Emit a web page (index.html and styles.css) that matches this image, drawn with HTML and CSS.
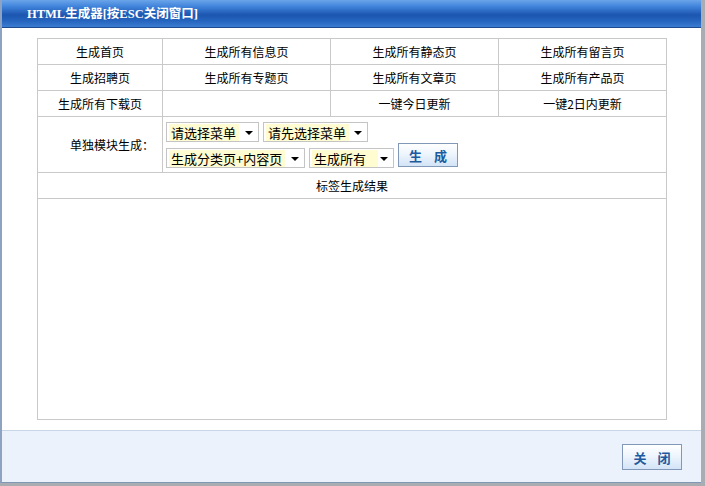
FILE: index.html
```html
<!DOCTYPE html>
<html lang="zh-CN">
<head>
    <meta charset="UTF-8">
    <title>HTML生成器</title>
    <link rel="stylesheet" href="styles.css">
</head>
<body>
    <div class="dialog">
        <div class="dialog-title">HTML生成器[按ESC关闭窗口]</div>

        <div class="dialog-body">
            <table class="gen-table">
                <colgroup>
                    <col class="c1"><col class="c2"><col class="c3"><col class="c4">
                </colgroup>
                <tr>
                    <td>生成首页</td>
                    <td>生成所有信息页</td>
                    <td>生成所有静态页</td>
                    <td>生成所有留言页</td>
                </tr>
                <tr>
                    <td>生成招聘页</td>
                    <td>生成所有专题页</td>
                    <td>生成所有文章页</td>
                    <td>生成所有产品页</td>
                </tr>
                <tr>
                    <td>生成所有下载页</td>
                    <td></td>
                    <td>一键今日更新</td>
                    <td>一键2日内更新</td>
                </tr>
                <tr class="module-row">
                    <td class="label">单独模块生成：</td>
                    <td colspan="3" class="module-cell">
                        <div class="sel-line">
                            <div class="fake-select w1"><span class="sel-text">请选择菜单</span><span class="arrow"></span></div>
                            <div class="fake-select w2"><span class="sel-text">请先选择菜单</span><span class="arrow"></span></div>
                        </div>
                        <div class="sel-line">
                            <div class="fake-select w3"><span class="sel-text">生成分类页+内容页</span><span class="arrow"></span></div>
                            <div class="fake-select w4"><span class="sel-text wide">生成所有</span><span class="arrow"></span></div>
                            <button class="btn gen-btn"><span>生</span><span>成</span></button>
                        </div>
                    </td>
                </tr>
                <tr>
                    <td colspan="4">标签生成结果</td>
                </tr>
                <tr class="result-row">
                    <td colspan="4"></td>
                </tr>
            </table>
        </div>

        <div class="dialog-footer">
            <button class="btn close-btn"><span>关</span><span>闭</span></button>
        </div>
    </div>
</body>
</html>
```

FILE: styles.css
```css
body {
    margin: 0;
    background-color: #a9acb1;
    font-family: "Noto Sans CJK SC", "Liberation Sans", sans-serif;
    font-size: 12px;
    color: #000;
}

.dialog {
    width: 699px;
    height: 482px;
    background-color: #fff;
    border-left: 2px solid #8ea3c2;
    border-bottom: 1px solid #7f96b5;
    display: flex;
    flex-direction: column;
}

.dialog-title {
    height: 27px;
    line-height: 28px;
    padding-left: 25px;
    color: #fff;
    font-family: "Liberation Serif", "Noto Sans CJK SC", serif;
    font-weight: bold;
    font-size: 12.5px;
    background: linear-gradient(to bottom, #6aa5ea 0%, #3f82da 25%, #1c56b0 55%, #2463bd 75%, #3b7bd0 100%);
    border-bottom: 1px solid #1c4a8c;
}

.dialog-body {
    flex: 1;
    padding: 10px 0 0 35px;
}

.gen-table {
    width: 630px;
    border-collapse: collapse;
    table-layout: fixed;
}

.c1 { width: 125px; }
.c2 { width: 168px; }
.c3 { width: 168px; }
.c4 { width: 168px; }

.gen-table td {
    border: 1px solid #c9c9c9;
    height: 25px;
    padding: 0;
    text-align: center;
    line-height: 16px;
}

.gen-table .label {
    text-align: right;
    padding-right: 8px;
}

.module-row td {
    height: 55px;
}

.gen-table .module-cell {
    height: 46px;
    text-align: left;
    padding: 5px 0 4px 3px;
}

.sel-line {
    display: flex;
    align-items: flex-end;
    gap: 4px;
}

.sel-line + .sel-line {
    margin-top: 1px;
}

.fake-select {
    box-sizing: border-box;
    height: 20px;
    margin-top: 4px;
    border: 1px solid #c4c4c4;
    background-color: #fff;
    display: flex;
    align-items: center;
    padding-left: 2px;
    position: relative;
    font-size: 13px;
}

.sel-line:first-child .fake-select {
    margin-top: 0;
}

.sel-text {
    background-color: #fffcd2;
    padding: 0 3px 0 2px;
    line-height: 17px;
}

.sel-text.wide {
    width: 61px;
}

.arrow {
    position: absolute;
    right: 5px;
    top: 8px;
    width: 0;
    height: 0;
    border-left: 4px solid transparent;
    border-right: 4px solid transparent;
    border-top: 4px solid #000;
}

.w1 { width: 93px; }
.w2 { width: 105px; }
.w3 { width: 139px; }
.w4 { width: 85px; }

.result-row td {
    height: 220px;
}

.btn {
    box-sizing: border-box;
    border: 1px solid #8198b8;
    background: linear-gradient(to bottom, #ffffff 0%, #eef5fd 45%, #d3e4f7 100%);
    color: #1e5a9e;
    font-family: "Noto Sans CJK SC", sans-serif;
    font-weight: bold;
    font-size: 13px;
    padding: 0;
    cursor: pointer;
    display: flex;
    justify-content: center;
    align-items: center;
    gap: 12px;
}

.gen-btn {
    width: 60px;
    height: 24px;
    margin-bottom: 1px;
}

.dialog-footer {
    height: 51px;
    background-color: #ebf2fb;
    border-top: 1px solid #c7d5e6;
    display: flex;
    justify-content: flex-end;
    align-items: flex-start;
    padding-right: 19px;
}

.close-btn {
    width: 60px;
    height: 26px;
    margin-top: 13px;
    gap: 11px;
}
```
